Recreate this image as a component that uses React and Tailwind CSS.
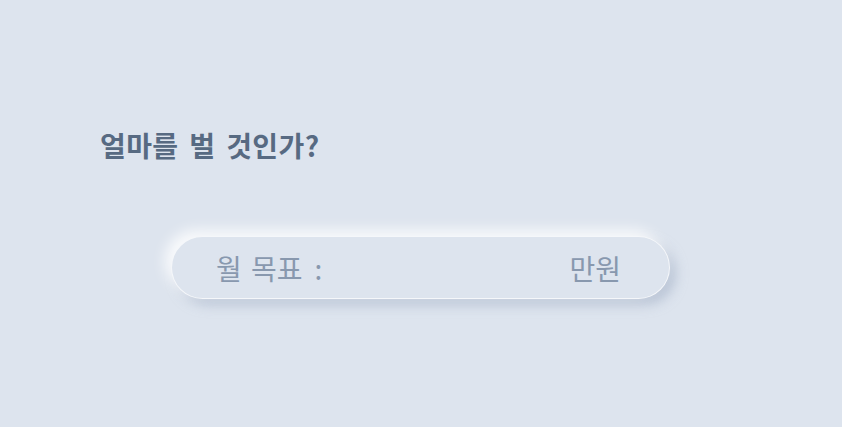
import React, { useState } from 'react';

const font = { fontFamily: '"Noto Sans CJK KR", "Noto Sans", sans-serif' };

export default function App() {
  const [goal, setGoal] = useState('');

  return (
    <div className="min-h-[427px] w-full bg-[#dde4ee]" style={font}>
      <div className="pl-[100px] pt-[124px]">
        <h1 className="text-[28px] font-bold leading-[42px] tracking-[0.4px] [word-spacing:4px] text-[#576a82]">얼마를 벌 것인가?</h1>
      </div>
      <div className="pl-[171px] pt-[70px]">
        <div className="flex h-[63px] w-[499px] items-center rounded-full border border-white/70 bg-[#dde4ee] pl-[44px] pr-[48px] shadow-[-6px_-6px_14px_rgba(255,255,255,0.85),6px_6px_12px_rgba(163,177,198,0.6)]">
          <span className="text-[28px] [word-spacing:3px] text-[#8898ae]">
            월 목표<span className="ml-[12px]">:</span>
          </span>
          <input
            value={goal}
            onChange={e => setGoal(e.target.value)}
            className="min-w-0 flex-1 bg-transparent px-3 text-right text-[28px] text-[#576a82] outline-none"
          />
          <span className="text-[28px] text-[#8898ae]">만원</span>
        </div>
      </div>
    </div>
  );
}
